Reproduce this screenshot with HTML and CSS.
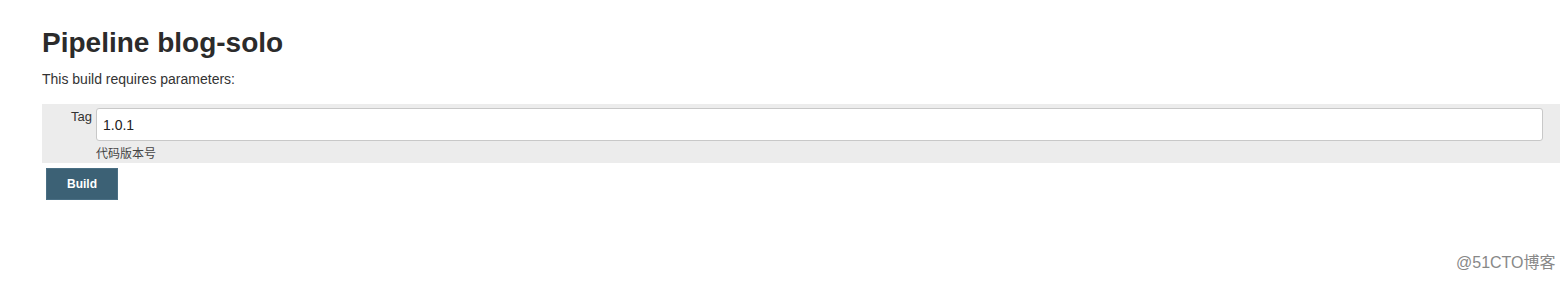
FILE: index.html
```html
<!DOCTYPE html>
<html lang="zh-CN">
<head>
<meta charset="utf-8">
<title>Pipeline blog-solo</title>
<link rel="stylesheet" href="styles.css">
</head>
<body>
<main class="page">
  <h1 class="title">Pipeline blog-solo</h1>
  <p class="intro">This build requires parameters:</p>
  <form class="params">
    <div class="param-band">
      <div class="param-row">
        <label class="param-label" for="tag">Tag</label>
        <div class="param-field">
          <input id="tag" class="param-input" type="text" value="1.0.1">
          <div class="param-desc">代码版本号</div>
        </div>
      </div>
    </div>
    <button type="button" class="build-btn">Build</button>
  </form>
</main>
<div class="watermark">@51CTO博客</div>
</body>
</html>
```
FILE: styles.css
```css
html, body {
  margin: 0;
  padding: 0;
  background: #fff;
}
body {
  font-family: "Liberation Sans", Arial, "Noto Sans CJK SC", sans-serif;
  color: #333;
  width: 1564px;
  height: 282px;
  overflow: hidden;
  position: relative;
}
.page {
  padding: 27px 4px 0 42px;
}
.title {
  margin: 0;
  font-size: 28px;
  line-height: 32px;
  font-weight: bold;
  color: #2b2b2b;
}
.intro {
  margin: 12px 0 0;
  font-size: 14px;
  line-height: 16px;
  color: #333;
}
.params {
  margin: 17px 0 0;
}
.param-band {
  background: #ececec;
  padding: 4px 17px 2px 0;
}
.param-row {
  display: flex;
  align-items: flex-start;
}
.param-label {
  width: 50px;
  padding: 1px 4px 0 0;
  text-align: right;
  font-size: 13px;
  line-height: 16px;
  color: #333;
}
.param-field {
  flex: 1;
  display: flex;
  flex-direction: column;
}
.param-input {
  box-sizing: border-box;
  width: 100%;
  height: 33px;
  margin: 0;
  padding: 0 6px;
  border: 1px solid #c8c8c8;
  border-radius: 3px;
  background: #fff;
  font-family: "Liberation Sans", Arial, sans-serif;
  font-size: 14px;
  color: #222;
  outline: none;
}
.param-desc {
  margin-top: 4px;
  font-family: "Noto Sans CJK SC", "Liberation Sans", sans-serif;
  font-size: 12px;
  line-height: 16px;
  color: #444;
}
.build-btn {
  display: block;
  box-sizing: border-box;
  width: 72px;
  height: 32px;
  margin: 5px 0 0 4px;
  padding: 0;
  background: #3c6175;
  border: 1px solid #4a6f84;
  color: #fff;
  font-family: "Liberation Sans", Arial, sans-serif;
  font-size: 12px;
  font-weight: bold;
  cursor: pointer;
}
.watermark {
  position: absolute;
  left: 1456px;
  top: 253px;
  font-family: "Liberation Sans", Arial, "Noto Sans CJK SC", sans-serif;
  font-size: 16px;
  line-height: 19px;
  color: #888;
  white-space: nowrap;
}
```
